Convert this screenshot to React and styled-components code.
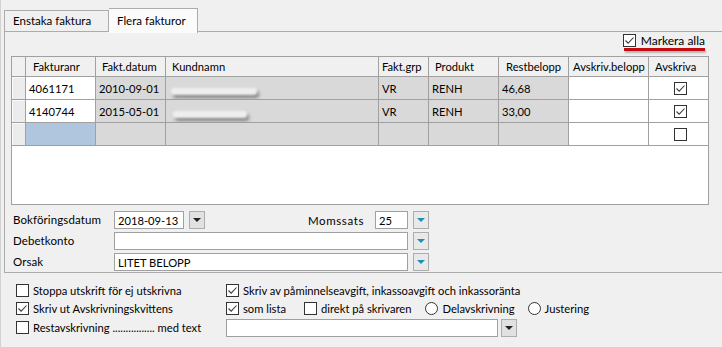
import React from "react"
import styled, { createGlobalStyle } from "styled-components"

const Global = createGlobalStyle`
  * { box-sizing: border-box; margin: 0; padding: 0; }
  body {
    margin: 0;
    background: #f0f0f0;
    font-family: Lato, "Liberation Sans", sans-serif;
    font-size: 11.2px;
    color: #000;
  }
`

const Page = styled.div`
  width: 722px;
  height: 347px;
  overflow: hidden;
  background: #f0f0f0;
  border-left: 1px solid #d2d2d2;
  display: flex;
  flex-direction: column;
`

const TabStrip = styled.div`
  display: flex;
  align-items: flex-end;
  height: 32px;
  padding-left: 3px;
  position: relative;
  z-index: 1;
`

const Tab = styled.div`
  height: ${({ active }) => (active ? "25px" : "22px")};
  width: ${({ w }) => w}px;
  padding-left: 8px;
  padding-top: ${({ active }) => (active ? "5px" : "3px")};
  border: 1px solid #acacac;
  border-bottom: ${({ active }) => (active ? "none" : "1px solid #acacac")};
  border-left: ${({ active }) => (active ? "none" : "1px solid #acacac")};
  margin-bottom: ${({ active }) => (active ? "-1px" : "0")};
  background: ${({ active }) => (active ? "#fbfbfb" : "#f0f0f0")};
  white-space: nowrap;
  font-size: 11.5px;
`

const Panel = styled.div`
  margin-left: 3px;
  margin-top: -1px;
  height: 242px;
  border: 1px solid #acacac;
  border-right: none;
  display: flex;
  flex-direction: column;
  padding: 1px 0 0 6px;
`

const MarkRow = styled.div`
  display: flex;
  justify-content: flex-end;
  padding-right: 17px;
  height: 23px;
`

const Mark = styled.label`
  position: relative;
  display: flex;
  align-items: center;
  gap: 5px;
  height: 15px;
  font-size: 12px;
  &::after {
    content: "";
    position: absolute;
    left: 1px;
    right: 0;
    top: 15px;
    height: 3px;
    background: #c40c10;
    box-shadow: 1px 2px 2px rgba(0, 0, 0, 0.25);
  }
`

const GridBox = styled.div`
  width: 698px;
  height: 149px;
  border: 1px solid #a0a0a0;
  background: #fff;
  overflow: hidden;
`

const Table = styled.table`
  border-collapse: collapse;
  table-layout: fixed;
  width: 684px;
  margin: -1px 0 0 -1px;
`

const Th = styled.th`
  height: 20px;
  font-weight: normal;
  text-align: left;
  padding: 0 0 0 ${({ pad }) => pad ?? 6}px;
  background: #f0f0f0;
  border: 1px solid #a0a0a0;
  white-space: nowrap;
  overflow: hidden;
`

const RowHead = styled.td`
  background: #ececec;
  border: 1px solid #a0a0a0;
  box-shadow: inset 1px 1px 0 #fafafa;
`

const Td = styled.td`
  height: 23px;
  padding: 0 0 0 ${({ pad }) => pad ?? 3}px;
  border: 1px solid #a0a0a0;
  background: ${({ tone }) =>
    tone === "white" ? "#fff" : tone === "sel" ? "#b0c5de" : "#d9d9d9"};
  white-space: nowrap;
  overflow: hidden;
  text-align: ${({ center }) => (center ? "center" : "left")};
`

const Smudge = styled.span`
  display: inline-block;
  width: ${({ w }) => w}px;
  height: 7px;
  margin-left: ${({ off }) => off}px;
  margin-top: 5px;
  background: #eeeeee;
  border-radius: 3px;
  box-shadow: 2px 3px 3px rgba(0, 0, 0, 0.4);
  filter: blur(0.8px);
  vertical-align: middle;
`

const Box = styled.span`
  display: inline-flex;
  align-items: center;
  justify-content: center;
  flex: none;
  width: 13px;
  height: 13px;
  border: 1px solid #333;
  background: #fff;
  vertical-align: middle;
`

const Radio = styled.span`
  display: inline-block;
  flex: none;
  width: 13px;
  height: 13px;
  border: 1px solid #333;
  border-radius: 50%;
  background: #fff;
`

const Check = ({ on }) => (
  <Box>
    {on && (
      <svg width="11" height="11" viewBox="0 0 11 11">
        <path d="M1.5 5.5 L4.2 8.2 L9.5 2.5" fill="none" stroke="#3c3c3c" strokeWidth="1.1" />
      </svg>
    )}
  </Box>
)

const Form = styled.div`
  display: grid;
  grid-template-columns: 96px 294px 16px;
  column-gap: 5px;
  row-gap: 3px;
  margin: 6px 0 0 2px;
`

const Label = styled.div`
  display: flex;
  align-items: center;
  height: 17px;
  font-size: 11.5px;
  letter-spacing: ${({ wide }) => (wide ? "0.6px" : "0.1px")};
`

const Inline = styled.div`
  display: flex;
  align-items: center;
  gap: 5px;
`

const Input = styled.div`
  height: 18px;
  width: ${({ w }) => (w ? `${w}px` : "100%")};
  border: 1px solid #a0a0a0;
  background: #fff;
  padding: 1px 0 0 3px;
  line-height: 15px;
  flex: none;
`

const DropBtn = styled.div`
  width: 16px;
  height: 18px;
  flex: none;
  border: 1px solid #adadad;
  background: ${({ dark }) => (dark ? "#e1e1e1" : "#e9e9e9")};
  display: flex;
  align-items: center;
  justify-content: center;
  &::after {
    content: "";
    border-left: 4px solid transparent;
    border-right: 4px solid transparent;
    border-top: 4px solid ${({ dark }) => (dark ? "#222" : "#1f8fb4")};
  }
`

const Spacer = styled.div`
  flex: 1;
`

const Options = styled.div`
  display: grid;
  grid-template-columns: 210px 1fr;
  grid-auto-rows: 18.5px;
  padding: 8px 0 0 15px;
`

const Opt = styled.div`
  display: flex;
  align-items: center;
  gap: 4px;
  white-space: nowrap;
  margin-right: ${({ mr }) => mr ?? 0}px;
`

const OptRow = styled.div`
  display: flex;
  gap: ${({ gap }) => gap ?? 0}px;
  align-items: ${({ low }) => (low ? "flex-end" : "center")};
`

const rows = [
  { nr: "4061171", date: "2010-09-01", smudge: [2, 86], grp: "VR", prod: "RENH", rest: "46,68", on: true },
  { nr: "4140744", date: "2015-05-01", smudge: [4, 74], grp: "VR", prod: "RENH", rest: "33,00", on: true },
]

export default function App() {
  return (
    <Page>
      <Global />
      <TabStrip>
        <Tab w={105}>Enstaka faktura</Tab>
        <Tab w={89} active>Flera fakturor</Tab>
      </TabStrip>
      <Panel>
        <MarkRow>
          <Mark>
            <Check on />
            Markera alla
          </Mark>
        </MarkRow>
        <GridBox>
          <Table>
            <colgroup>
              <col style={{ width: 14 }} />
              <col style={{ width: 70 }} />
              <col style={{ width: 70 }} />
              <col style={{ width: 213 }} />
              <col style={{ width: 50 }} />
              <col style={{ width: 70 }} />
              <col style={{ width: 70 }} />
              <col style={{ width: 80 }} />
              <col style={{ width: 60 }} />
            </colgroup>
            <thead>
              <tr>
                <Th />
                <Th pad={7}>Fakturanr</Th>
                <Th>Fakt.datum</Th>
                <Th>Kundnamn</Th>
                <Th pad={3}>Fakt.grp</Th>
                <Th>Produkt</Th>
                <Th pad={7}>Restbelopp</Th>
                <Th pad={4}>Avskriv.belopp</Th>
                <Th>Avskriva</Th>
              </tr>
            </thead>
            <tbody>
              {rows.map((r) => (
                <tr key={r.nr}>
                  <RowHead />
                  <Td tone="white">{r.nr}</Td>
                  <Td>{r.date}</Td>
                  <Td>
                    <Smudge off={r.smudge[0]} w={r.smudge[1]} />
                  </Td>
                  <Td>{r.grp}</Td>
                  <Td>{r.prod}</Td>
                  <Td>{r.rest}</Td>
                  <Td tone="white" />
                  <Td tone="white" center>
                    <Check on={r.on} />
                  </Td>
                </tr>
              ))}
              <tr>
                <RowHead />
                <Td tone="sel" />
                <Td />
                <Td />
                <Td />
                <Td />
                <Td />
                <Td tone="white" />
                <Td tone="white" center>
                  <Check />
                </Td>
              </tr>
            </tbody>
          </Table>
        </GridBox>
        <Form>
          <Label>Bokföringsdatum</Label>
          <Inline>
            <Input w={70}>2018-09-13</Input>
            <DropBtn dark />
            <Spacer />
            <Label wide>Momssats</Label>
            <Input w={33} style={{ marginLeft: 6 }}>25</Input>
          </Inline>
          <DropBtn />
          <Label>Debetkonto</Label>
          <Input />
          <DropBtn />
          <Label>Orsak</Label>
          <Input>LITET BELOPP</Input>
          <DropBtn />
        </Form>
      </Panel>
      <Options>
        <Opt>
          <Check />
          Stoppa utskrift för ej utskrivna
        </Opt>
        <Opt>
          <Check on />
          Skriv av påminnelseavgift, inkassoavgift och inkassoränta
        </Opt>
        <Opt>
          <Check on />
          Skriv ut Avskrivningskvittens
        </Opt>
        <OptRow>
          <Opt mr={18}>
            <Check on />
            som lista
          </Opt>
          <Opt mr={14}>
            <Check />
            direkt på skrivaren
          </Opt>
          <Opt mr={13}>
            <Radio />
            Delavskrivning
          </Opt>
          <Opt>
            <Radio />
            Justering
          </Opt>
        </OptRow>
        <Opt>
          <Check />
          Restavskrivning ................ med text
        </Opt>
        <OptRow low gap={3}>
          <Input w={272}></Input>
          <DropBtn dark />
        </OptRow>
      </Options>
    </Page>
  )
}
